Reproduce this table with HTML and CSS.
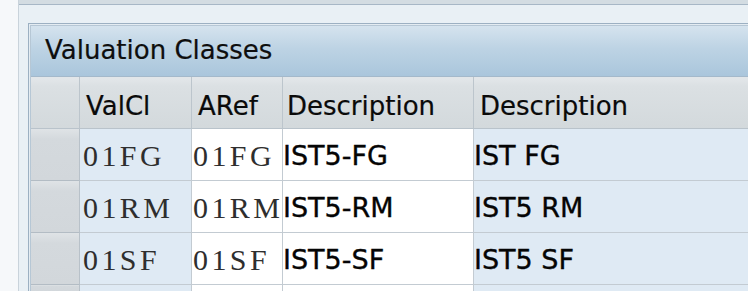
FILE: index.html
```html
<!DOCTYPE html>
<html>
<head>
<meta charset="utf-8">
<link rel="stylesheet" href="styles.css">
</head>
<body>
<div class="strip"></div>
<div class="main">
  <div class="topbar"></div>
  <div class="panel">
    <div class="panel-inner">
      <div class="title">Valuation Classes</div>
      <div class="row head">
        <div class="cell sel"></div>
        <div class="cell c1">ValCl</div>
        <div class="cell c2">ARef</div>
        <div class="cell c3">Description</div>
        <div class="cell c4">Description</div>
      </div>
      <div class="row">
        <div class="cell sel"></div>
        <div class="cell c1 mono blue">01FG</div>
        <div class="cell c2 mono white">01FG</div>
        <div class="cell c3 txt white">IST5-FG</div>
        <div class="cell c4 txt blue">IST FG</div>
      </div>
      <div class="row">
        <div class="cell sel"></div>
        <div class="cell c1 mono blue">01RM</div>
        <div class="cell c2 mono white">01RM</div>
        <div class="cell c3 txt white">IST5-RM</div>
        <div class="cell c4 txt blue">IST5 RM</div>
      </div>
      <div class="row">
        <div class="cell sel"></div>
        <div class="cell c1 mono blue">01SF</div>
        <div class="cell c2 mono white">01SF</div>
        <div class="cell c3 txt white">IST5-SF</div>
        <div class="cell c4 txt blue">IST5 SF</div>
      </div>
      <div class="row last">
        <div class="cell sel"></div>
        <div class="cell c1 blue"></div>
        <div class="cell c2 white"></div>
        <div class="cell c3 white"></div>
        <div class="cell c4 blue"></div>
      </div>
    </div>
  </div>
</div>
</body>
</html>
```
FILE: styles.css
```css
html, body {
  margin: 0;
  padding: 0;
  width: 748px;
  height: 291px;
  overflow: hidden;
}
body {
  display: flex;
  background: #f6f8fa;
  font-family: "DejaVu Sans", "Noto Sans", sans-serif;
  color: #111;
}
.strip {
  width: 18px;
  flex: none;
}
.main {
  flex: 1;
  border-left: 1px solid #c9d3db;
  background: #e9f0f5;
  min-width: 0;
}
.topbar {
  height: 4px;
  background: #d3dce2;
  border-bottom: 1px solid #a7b7c6;
}
.panel {
  margin-top: 18px;
  margin-left: 9px;
  border-top: 1px solid #9cb0c2;
  border-left: 1px solid #9cb0c2;
  padding: 1px 0 0 1px;
  background: #e4ecf2;
}
.panel-inner {
  border-top: 1px solid #b6c7d5;
  border-left: 1px solid #b6c7d5;
}
.title {
  height: 51px;
  box-sizing: border-box;
  padding-left: 14px;
  padding-top: 7px;
  font-size: 26px;
  line-height: 34px;
  background: linear-gradient(to bottom, #d5e3ee 0%, #bdd3e4 45%, #aac6dc 100%);
  border-bottom: 1px solid #a4b9cb;
  color: #0e0e0e;
  -webkit-text-stroke: 0.2px #0e0e0e;
}
.row {
  display: flex;
  height: 52px;
}
.row.last { height: 6px; }
.cell {
  box-sizing: border-box;
  height: 52px;
  border-right: 1px solid #c3cbd2;
  border-bottom: 1px solid #c3cbd2;
  display: flex;
  align-items: center;
  white-space: nowrap;
  overflow: hidden;
}
.row.last .cell { height: 6px; border-bottom: none; }
.sel { width: 49px; flex: none; background: linear-gradient(to bottom, #dfe3e6 0%, #d4d9dd 20%, #d2d7db 100%); border-right-color: #b8c1c9; border-bottom-color: #b3bcc4; }
.c1 { width: 112px; flex: none; }
.c2 { width: 91px; flex: none; }
.c3 { width: 191px; flex: none; }
.c4 { flex: 1; border-right: none; }
.head .cell {
  background: linear-gradient(to bottom, #e2e6e9 0%, #e2e6e9 4%, #dbe0e3 18%, #d3d9dc 100%);
  border-bottom-color: #b9c3cb;
  border-right-color: #bcc5cc;
  font-size: 26px;
  padding-left: 6px;
  padding-top: 6px;
  color: #0a0a0a;
  -webkit-text-stroke: 0.2px #0a0a0a;
}
.head .c3 { padding-left: 4px; }
.blue { background: #dfeaf4; }
.white { background: #ffffff; }
.mono {
  font-family: "Liberation Serif", serif;
  font-size: 30px;
  letter-spacing: 3.4px;
  color: #2e2e2e;
  padding-left: 3px;
  padding-top: 2px;
}
.c2.mono { padding-left: 1px; }
.txt {
  font-size: 27px;
  color: #050505;
  padding-left: 0;
  padding-top: 2px;
  -webkit-text-stroke: 0.35px #050505;
}
```
